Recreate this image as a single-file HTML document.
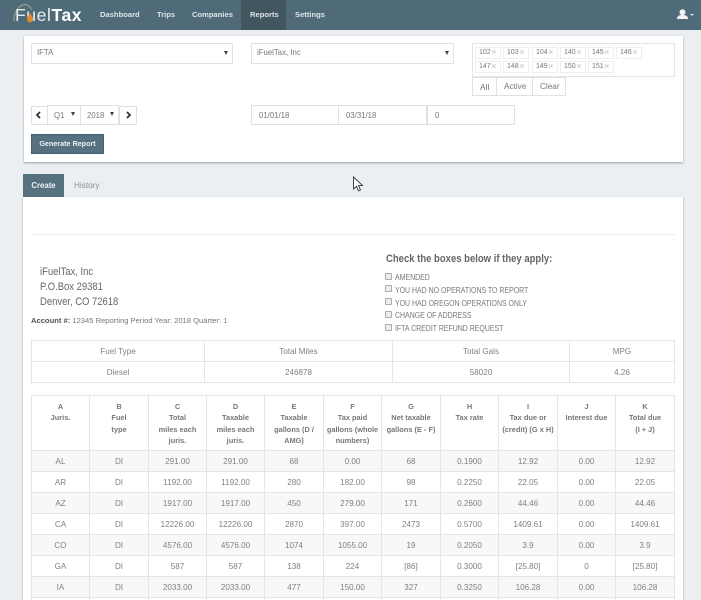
<!DOCTYPE html>
<html><head><meta charset="utf-8">
<style>
html,body{margin:0;padding:0;width:701px;height:600px;overflow:hidden}
body{background:#ebeff2;font-family:"Liberation Sans",sans-serif;color:#666;font-size:8px}
#w{position:absolute;left:0;top:0;width:701px;height:600px;overflow:hidden;background:#ebeff2;filter:blur(.3px)}
.a{position:absolute;white-space:nowrap}
#nav{left:0;top:0;width:701px;height:30px;background:#4f6a78}
.n{top:9px;font-size:7.6px;font-weight:bold;color:#dfe6ea;line-height:11px}
.card{background:#fff;box-shadow:0 1px 2px rgba(0,0,0,.35)}
.box{background:#fff;border:1px solid #dfe1e2;box-sizing:border-box;line-height:18px;font-size:7.8px;color:#777;padding-left:5px}
.tri{position:absolute;width:0;height:0;border-left:2.3px solid transparent;border-right:2.3px solid transparent;border-top:4.5px solid #444}
.tag{border:1px solid #eee;box-sizing:border-box;height:12px;line-height:10px;font-size:7px;color:#777;padding-left:3px;width:26px;top:0}
.tag i{position:absolute;left:15px;top:0;font-style:normal;font-size:9.5px;color:#c4c4c4}
table{position:absolute;border-collapse:collapse;table-layout:fixed;text-align:center;color:#808080;font-size:8.1px}
td,th{border:1px solid #e3e5e6;padding:0;box-sizing:border-box}
#t th{font-size:7.4px;color:#777;vertical-align:top;padding-top:5px;line-height:11.3px;font-weight:bold}
#t tr.d{height:21px}
#t tr.o{background:#f8f8f8}
.chk{width:5px;height:5px;border:1px solid #aaa;background:#eee;border-radius:1px;left:385px}
.l{left:395px;font-size:8.2px;color:#777;line-height:12px;transform:scaleX(.85);transform-origin:0 0}
.ad{left:40px;font-size:11.4px;color:#666;line-height:14px;transform:scaleX(.83);transform-origin:0 0}
</style></head><body><div id="w">
<div id="nav" class="a"></div>
<div class="a" style="left:241px;top:0;width:45px;height:30px;background:#42565f"></div>
<svg class="a" style="left:12px;top:3px" width="30" height="24" viewBox="0 0 30 24"><path d="M2 18C2 10 6 2 13 1.500c3 0 5 2 7 5" fill="none" stroke="#8a9a80" stroke-width="1.4"/></svg>
<div class="a" style="left:15px;top:4px;font-size:17.500px;line-height:22px;color:#e8eef0;letter-spacing:.6px">Fuel<b style="color:#fff">Tax</b></div>
<svg class="a" style="left:25px;top:12px" width="10" height="12" viewBox="0 0 10 12"><path d="M5 1c1 2 3 4 3 6.500a3 3 0 0 1-6 0C2 5 4 3 5 1z" fill="#e08a2e"/></svg>
<div class="a n" style="left:100px">Dashboard</div>
<div class="a n" style="left:157px">Trips</div>
<div class="a n" style="left:192px">Companies</div>
<div class="a n" style="left:250px">Reports</div>
<div class="a n" style="left:295px">Settings</div>
<svg class="a" style="left:677px;top:9px" width="18" height="11" viewBox="0 0 18 11"><circle cx="5.500" cy="3.200" r="3" fill="#f2f4f5"/><path d="M0 10c0-3 2-4 5.500-4S11 7 11 10z" fill="#f2f4f5"/><path d="M13 5h4l-2 2z" fill="#dfe5e8"/></svg>

<div class="a card" style="left:24px;top:36px;width:659px;height:126px"></div>
<div class="a box" style="left:31px;top:43px;width:202px;height:21px">IFTA</div>
<div class="tri" style="left:224px;top:51px"></div>
<div class="a box" style="left:251px;top:43px;width:203px;height:21px">iFuelTax, Inc</div>
<div class="tri" style="left:445px;top:51px"></div>

<div class="a" style="left:472px;top:43px;width:203px;height:34px;border:1px solid #e3e5e6;box-sizing:border-box"></div>
<div class="a" style="left:475px;top:47px;height:12px;width:200px">
<div class="a tag" style="left:0">102<i>×</i></div><div class="a tag" style="left:28px">103<i>×</i></div><div class="a tag" style="left:57px">104<i>×</i></div><div class="a tag" style="left:85px">140<i>×</i></div><div class="a tag" style="left:113px">145<i>×</i></div><div class="a tag" style="left:141px">146<i>×</i></div>
</div>
<div class="a" style="left:475px;top:61px;height:12px;width:200px">
<div class="a tag" style="left:0">147<i>×</i></div><div class="a tag" style="left:28px">148<i>×</i></div><div class="a tag" style="left:57px">149<i>×</i></div><div class="a tag" style="left:85px">150<i>×</i></div><div class="a tag" style="left:113px">151<i>×</i></div>
</div>
<div class="a box" style="left:472px;top:77px;width:25px;height:19px;padding-left:7px;font-size:8.400px;line-height:18px">All</div>
<div class="a box" style="left:496px;top:77px;width:37px;height:19px;padding-left:7px;font-size:8.200px;line-height:18px">Active</div>
<div class="a box" style="left:532px;top:77px;width:34px;height:19px;padding-left:7px;font-size:8.200px;line-height:18px">Clear</div>

<div class="a box" style="left:31px;top:106px;width:17px;height:19px"></div>
<div class="a box" style="left:47px;top:105px;width:34px;height:20px;line-height:19px;padding-left:6px">Q1</div>
<div class="tri" style="left:71px;top:112px"></div>
<div class="a box" style="left:80px;top:105px;width:39px;height:20px;line-height:19px;padding-left:6px">2018</div>
<div class="tri" style="left:110px;top:112px"></div>
<div class="a box" style="left:119px;top:106px;width:18px;height:19px"></div>
<svg class="a" style="left:35px;top:111px" width="7" height="8"><path d="M5 1L2 4l3 3" fill="none" stroke="#333" stroke-width="1.800"/></svg>
<svg class="a" style="left:125px;top:111px" width="7" height="8"><path d="M2 1l3 3-3 3" fill="none" stroke="#333" stroke-width="1.800"/></svg>

<div class="a box" style="left:251px;top:105px;width:88px;height:20px;line-height:19px;padding-left:7px">01/01/18</div>
<div class="a box" style="left:338px;top:105px;width:89px;height:20px;line-height:19px;padding-left:7px">03/31/18</div>
<div class="a box" style="left:427px;top:105px;width:88px;height:20px;line-height:19px;padding-left:7px">0</div>

<div class="a" style="left:31px;top:134px;width:73px;height:20px;background:#567180;border:1px solid #4a6170;box-sizing:border-box;color:#eef2f4;font-weight:bold;font-size:7.200px;line-height:18px;text-align:center">Generate Report</div>

<svg class="a" style="left:352px;top:176px" width="12" height="16" viewBox="0 0 12 16"><path d="M1.500 1v12l3-2.600 2 4.400 2-.9-2-4.300h4z" fill="#fff" stroke="#333" stroke-width=".9"/></svg>

<div class="a" style="left:23px;top:174px;width:41px;height:23px;background:#567180;color:#eef2f4;font-weight:bold;font-size:7.800px;line-height:24px;text-align:center">Create</div>
<div class="a" style="left:74px;top:174px;color:#84949c;font-size:8.200px;line-height:24px">History</div>

<div class="a card" style="left:23px;top:197px;width:660px;height:420px"></div>
<div class="a" style="left:31px;top:234px;width:644px;height:1px;background:#eeeeee"></div>

<div class="a ad" style="top:265px">iFuelTax, Inc</div>
<div class="a ad" style="top:280px">P.O.Box 29381</div>
<div class="a ad" style="top:295px">Denver, CO 72618</div>
<div class="a" style="left:31px;top:315px;font-size:7.600px;line-height:11px;color:#777"><b style="color:#555">Account #:</b> 12345 Reporting Period Year: 2018 Quarter: 1</div>

<div class="a" style="left:386px;top:252px;font-size:10.800px;font-weight:bold;color:#666;line-height:14px;transform:scaleX(.88);transform-origin:0 0">Check the boxes below if they apply:</div>
<div class="a chk" style="top:273px"></div><div class="a l" style="top:272px">AMENDED</div>
<div class="a chk" style="top:285px"></div><div class="a l" style="top:285px">YOU HAD NO OPERATIONS TO REPORT</div>
<div class="a chk" style="top:298px"></div><div class="a l" style="top:298px">YOU HAD OREGON OPERATIONS ONLY</div>
<div class="a chk" style="top:311px"></div><div class="a l" style="top:310px">CHANGE OF ADDRESS</div>
<div class="a chk" style="top:324px"></div><div class="a l" style="top:323px">IFTA CREDIT REFUND REQUEST</div>

<table style="left:31px;top:340px;width:643px;height:43px">
<colgroup><col style="width:173px"><col style="width:188px"><col style="width:177px"><col style="width:105px"></colgroup>
<tr style="height:21px"><td>Fuel Type</td><td>Total Miles</td><td>Total Gals</td><td>MPG</td></tr>
<tr style="height:21px"><td>Diesel</td><td>246878</td><td>58020</td><td>4.26</td></tr>
</table>

<table id="t" style="left:31px;top:395px;width:643px">
<colgroup><col style="width:58px"><col style="width:59px"><col style="width:58px"><col style="width:58px"><col style="width:59px"><col style="width:58px"><col style="width:59px"><col style="width:58px"><col style="width:59px"><col style="width:58px"><col style="width:59px"></colgroup>
<tr style="height:55px"><th>A<br>Juris.</th><th>B<br>Fuel<br>type</th><th>C<br>Total<br>miles each<br>juris.</th><th>D<br>Taxable<br>miles each<br>juris.</th><th>E<br>Taxable<br>gallons (D /<br>AMG)</th><th>F<br>Tax paid<br>gallons (whole<br>numbers)</th><th>G<br>Net taxable<br>gallons (E - F)</th><th>H<br>Tax rate</th><th>I<br>Tax due or<br>(credit) (G x H)</th><th>J<br>Interest due</th><th>K<br>Total due<br>(I + J)</th></tr>
<tr class="d o"><td>AL</td><td>DI</td><td>291.00</td><td>291.00</td><td>68</td><td>0.00</td><td>68</td><td>0.1900</td><td>12.92</td><td>0.00</td><td>12.92</td></tr>
<tr class="d"><td>AR</td><td>DI</td><td>1192.00</td><td>1192.00</td><td>280</td><td>182.00</td><td>98</td><td>0.2250</td><td>22.05</td><td>0.00</td><td>22.05</td></tr>
<tr class="d o"><td>AZ</td><td>DI</td><td>1917.00</td><td>1917.00</td><td>450</td><td>279.00</td><td>171</td><td>0.2600</td><td>44.46</td><td>0.00</td><td>44.46</td></tr>
<tr class="d"><td>CA</td><td>DI</td><td>12226.00</td><td>12226.00</td><td>2870</td><td>397.00</td><td>2473</td><td>0.5700</td><td>1409.61</td><td>0.00</td><td>1409.61</td></tr>
<tr class="d o"><td>CO</td><td>DI</td><td>4576.00</td><td>4576.00</td><td>1074</td><td>1055.00</td><td>19</td><td>0.2050</td><td>3.9</td><td>0.00</td><td>3.9</td></tr>
<tr class="d"><td>GA</td><td>DI</td><td>587</td><td>587</td><td>138</td><td>224</td><td>[86]</td><td>0.3000</td><td>[25.80]</td><td>0</td><td>[25.80]</td></tr>
<tr class="d o"><td>IA</td><td>DI</td><td>2033.00</td><td>2033.00</td><td>477</td><td>150.00</td><td>327</td><td>0.3250</td><td>106.28</td><td>0.00</td><td>106.28</td></tr>
<tr class="d"><td></td><td></td><td></td><td></td><td></td><td></td><td></td><td></td><td></td><td></td><td></td></tr>
</table>
</div></body></html>
